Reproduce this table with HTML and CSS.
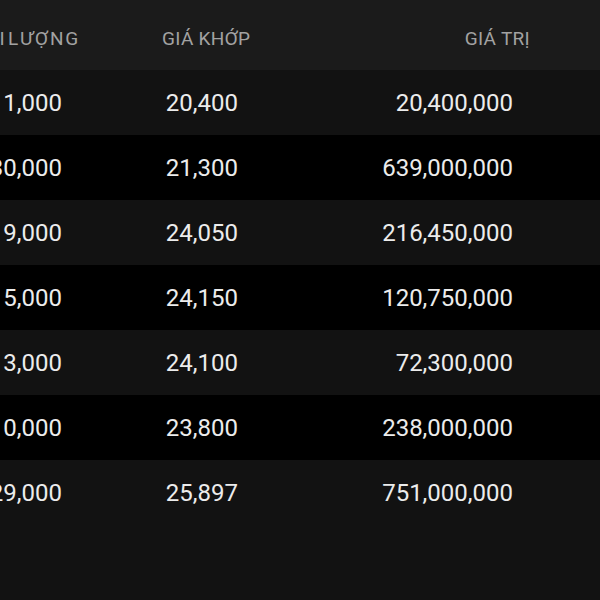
FILE: index.html
```html
<!DOCTYPE html>
<html lang="vi">
<head>
<meta charset="utf-8">
<title>Khớp lệnh</title>
<link rel="stylesheet" href="styles.css">
</head>
<body>
<div class="table">
  <div class="head">
    <div class="hcell h-vol">KHỐI LƯỢNG</div>
    <div class="hcell h-price">GIÁ KHỚP</div>
    <div class="hcell h-value">GIÁ TRỊ</div>
  </div>
  <div class="row light">
    <div class="cell vol">1,000</div>
    <div class="cell price">20,400</div>
    <div class="cell value">20,400,000</div>
  </div>
  <div class="row dark">
    <div class="cell vol">30,000</div>
    <div class="cell price">21,300</div>
    <div class="cell value">639,000,000</div>
  </div>
  <div class="row light">
    <div class="cell vol">9,000</div>
    <div class="cell price">24,050</div>
    <div class="cell value">216,450,000</div>
  </div>
  <div class="row dark">
    <div class="cell vol">5,000</div>
    <div class="cell price">24,150</div>
    <div class="cell value">120,750,000</div>
  </div>
  <div class="row light">
    <div class="cell vol">3,000</div>
    <div class="cell price">24,100</div>
    <div class="cell value">72,300,000</div>
  </div>
  <div class="row dark">
    <div class="cell vol">10,000</div>
    <div class="cell price">23,800</div>
    <div class="cell value">238,000,000</div>
  </div>
  <div class="row light">
    <div class="cell vol">29,000</div>
    <div class="cell price">25,897</div>
    <div class="cell value">751,000,000</div>
  </div>
</div>
</body>
</html>
```
FILE: styles.css
```css
html, body {
  margin: 0;
  padding: 0;
  background: #121212;
  overflow: hidden;
}
body {
  width: 600px;
  height: 600px;
  font-family: Roboto, "Liberation Sans", sans-serif;
}
.table {
  display: flex;
  flex-direction: column;
}
.head {
  display: flex;
  height: 70px;
  box-sizing: border-box;
  padding-top: 8px;
  line-height: 62px;
  background: #1b1b1b;
  color: #a2a2a2;
  font-size: 19px;
  letter-spacing: 0.3px;
  white-space: nowrap;
}
.hcell {
  display: flex;
}
.h-vol {
  width: 80px;
  flex: none;
  justify-content: flex-end;
  letter-spacing: 1.8px;
  word-spacing: -5px;
}
.h-price {
  margin-left: 82px;
}
.h-value {
  flex: 1;
  justify-content: flex-end;
  padding-right: 70px;
}
.row {
  display: grid;
  grid-template-columns: 62px 176px 275px;
  height: 65px;
  box-sizing: border-box;
  padding-top: 1px;
  line-height: 64px;
  font-size: 24px;
  color: #ececec;
  white-space: nowrap;
}
.row.light { background: #121212; }
.row.dark { background: #000000; }
.cell {
  display: flex;
  justify-content: flex-end;
}
```
